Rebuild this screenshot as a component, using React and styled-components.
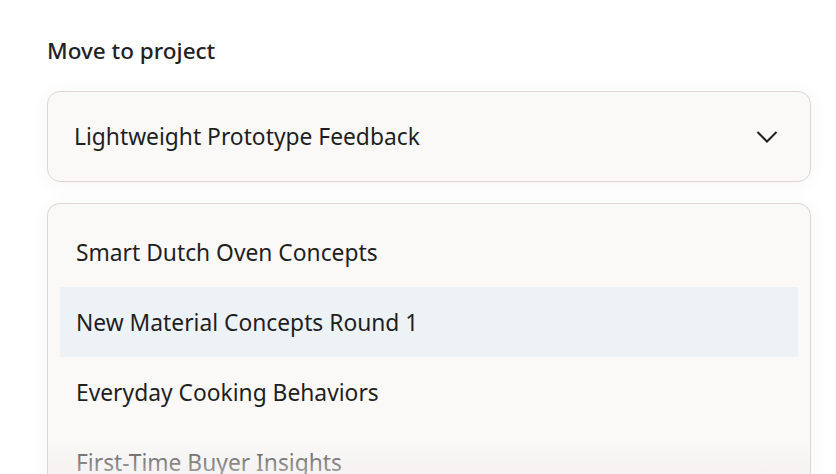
import React from "react";
import styled, { createGlobalStyle } from "styled-components";

const GlobalStyle = createGlobalStyle`
  html, body {
    margin: 0;
    padding: 0;
    background: #ffffff;
  }
  body {
    font-family: "Noto Sans", "Liberation Sans", sans-serif;
    color: #1f1f1f;
  }
`;

const Page = styled.main`
  width: 836px;
  height: 474px;
  overflow: hidden;
  box-sizing: border-box;
  padding: 36px 25px 0 47px;
  display: flex;
  flex-direction: column;
`;

const Label = styled.h2`
  margin: 0;
  font-size: 22.5px;
  font-weight: 500;
  line-height: 30px;
  color: #222222;
`;

const SelectBox = styled.button`
  flex-shrink: 0;
  margin-top: 25px;
  height: 91px;
  box-sizing: border-box;
  display: flex;
  align-items: center;
  justify-content: space-between;
  padding: 0 32px 0 26px;
  background: #faf9f8;
  border: 1.5px solid #ded6d3;
  border-radius: 13px;
  box-shadow: 0 2px 22px rgba(0, 0, 0, 0.045);
  font-family: inherit;
  font-size: 22.8px;
  color: #1f1f1f;
  text-align: left;
  cursor: pointer;
`;

const Menu = styled.ul`
  position: relative;
  margin: 21px 0 0;
  padding: 13px 12px 0;
  list-style: none;
  flex: 1;
  background: #faf9f8;
  border: 1.5px solid #ded6d3;
  border-bottom: none;
  border-radius: 13px 13px 0 0;
  box-shadow: 0 2px 22px rgba(0, 0, 0, 0.045);
  display: flex;
  flex-direction: column;

  &::after {
    content: "";
    position: absolute;
    left: 0;
    right: 0;
    bottom: 0;
    height: 60px;
    background: linear-gradient(rgba(243, 239, 238, 0), rgba(241, 237, 236, 0.85));
    pointer-events: none;
  }
`;

const Option = styled.li`
  height: 70px;
  flex-shrink: 0;
  display: flex;
  align-items: center;
  padding-left: 16px;
  font-size: 22.8px;
  color: ${(p) => (p.$muted ? "#4a4a4a" : "#1f1f1f")};
  background: ${(p) => (p.$active ? "#edf2f6" : "transparent")};
`;

const Chevron = () => (
  <svg width="22" height="14" viewBox="0 0 22 14" fill="none">
    <path d="M1.5 2 L11 11.5 L20.5 2" stroke="#1f1f1f" strokeWidth="2" />
  </svg>
);

const projects = [
  { name: "Smart Dutch Oven Concepts" },
  { name: "New Material Concepts Round 1", active: true },
  { name: "Everyday Cooking Behaviors" },
  { name: "First-Time Buyer Insights", muted: true },
];

export default function App() {
  return (
    <>
      <GlobalStyle />
      <Page>
        <Label>Move to project</Label>
        <SelectBox>
          <span>Lightweight Prototype Feedback</span>
          <Chevron />
        </SelectBox>
        <Menu>
          {projects.map((p) => (
            <Option key={p.name} $active={p.active} $muted={p.muted}>
              {p.name}
            </Option>
          ))}
        </Menu>
      </Page>
    </>
  );
}
